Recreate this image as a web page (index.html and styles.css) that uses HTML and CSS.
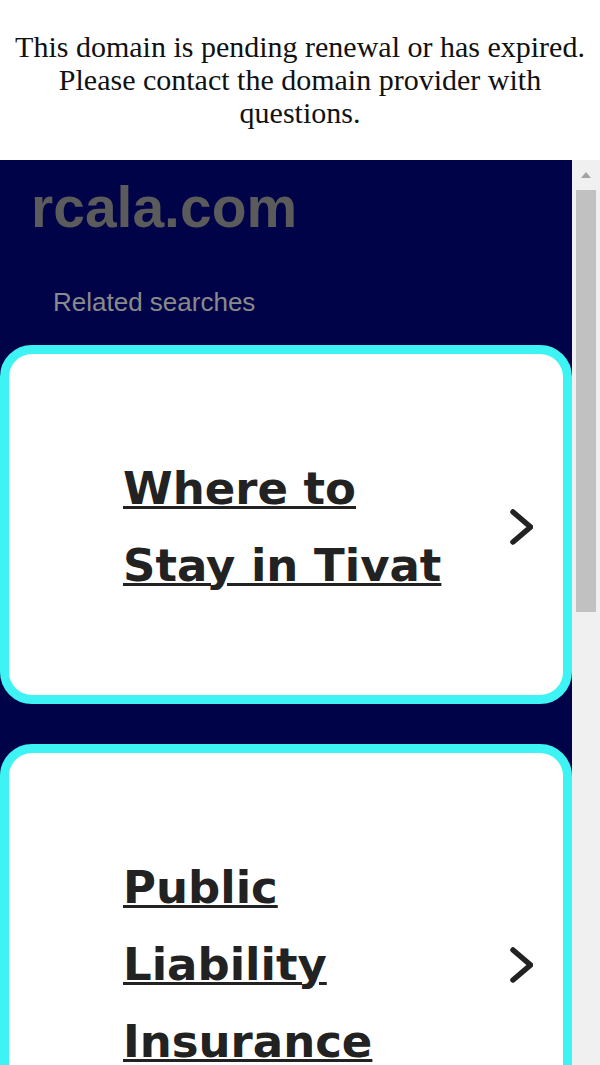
FILE: index.html
```html
<!DOCTYPE html>
<html>
<head>
<meta charset="utf-8">
<link rel="stylesheet" href="styles.css">
</head>
<body>
<p class="notice">This domain is pending renewal or has expired. Please contact the domain provider with questions.</p>
<div class="viewport">
  <div class="frame">
    <h1 class="domain">rcala.com</h1>
    <div class="related">Related searches</div>
    <div class="cards">
      <a class="card" href="#">
        <span class="card-text">Where to Stay in Tivat</span>
        <svg class="chev" width="24" height="38" viewBox="0 0 24 38"><polyline points="4,4 21.5,19 4,34" fill="none" stroke="#222" stroke-width="5.5" stroke-linecap="round" stroke-linejoin="miter"/></svg>
      </a>
      <a class="card" href="#">
        <span class="card-text">Public Liability Insurance</span>
        <svg class="chev" width="24" height="38" viewBox="0 0 24 38"><polyline points="4,4 21.5,19 4,34" fill="none" stroke="#222" stroke-width="5.5" stroke-linecap="round" stroke-linejoin="miter"/></svg>
      </a>
    </div>
  </div>
  <div class="scrollbar">
    <div class="arrow"></div>
    <div class="thumb"></div>
  </div>
</div>
</body>
</html>
```
FILE: styles.css
```css
html, body {
  margin: 0;
  padding: 0;
  background: #fff;
  height: 1065px;
  overflow: hidden;
}
.notice {
  margin: 30px 15px 31px;
  font-family: "Liberation Serif", "Times New Roman", serif;
  font-size: 30px;
  line-height: 33px;
  text-align: center;
  color: #111;
}
.viewport {
  display: flex;
  height: 905px;
}
.frame {
  flex: 1;
  background: #010349;
  overflow: hidden;
}
.domain {
  margin: 19px 0 0 31px;
  font-family: "Liberation Sans", Arial, sans-serif;
  font-weight: bold;
  font-size: 57px;
  line-height: 56px;
  color: #5b5b5b;
}
.related {
  margin: 52px 0 0 53px;
  font-family: "Liberation Sans", Arial, sans-serif;
  font-size: 26px;
  line-height: 30px;
  color: #8a8a8a;
}
.cards {
  margin-top: 28px;
  display: flex;
  flex-direction: column;
  gap: 40px;
}
.card {
  display: flex;
  align-items: center;
  background: #fff;
  border: 9px solid #3ef3f3;
  border-radius: 32px;
  padding: 96px 30px 91px 114px;
  text-decoration: none;
}
.card-text {
  flex: 1;
  font-family: "DejaVu Sans", Verdana, sans-serif;
  font-weight: bold;
  font-size: 45px;
  line-height: 77px;
  color: #222;
  text-decoration: underline;
  text-decoration-thickness: 3px;
}
.chev {
  flex: none;
  margin-left: 46px;
}
.scrollbar {
  width: 28px;
  background: #f0f0f0;
  display: flex;
  flex-direction: column;
  align-items: center;
}
.arrow {
  margin-top: 12px;
  width: 0;
  height: 0;
  border-left: 5px solid transparent;
  border-right: 5px solid transparent;
  border-bottom: 6px solid #a3a3a3;
}
.thumb {
  margin-top: 12px;
  width: 20px;
  height: 422px;
  background: #c1c1c1;
}
```
